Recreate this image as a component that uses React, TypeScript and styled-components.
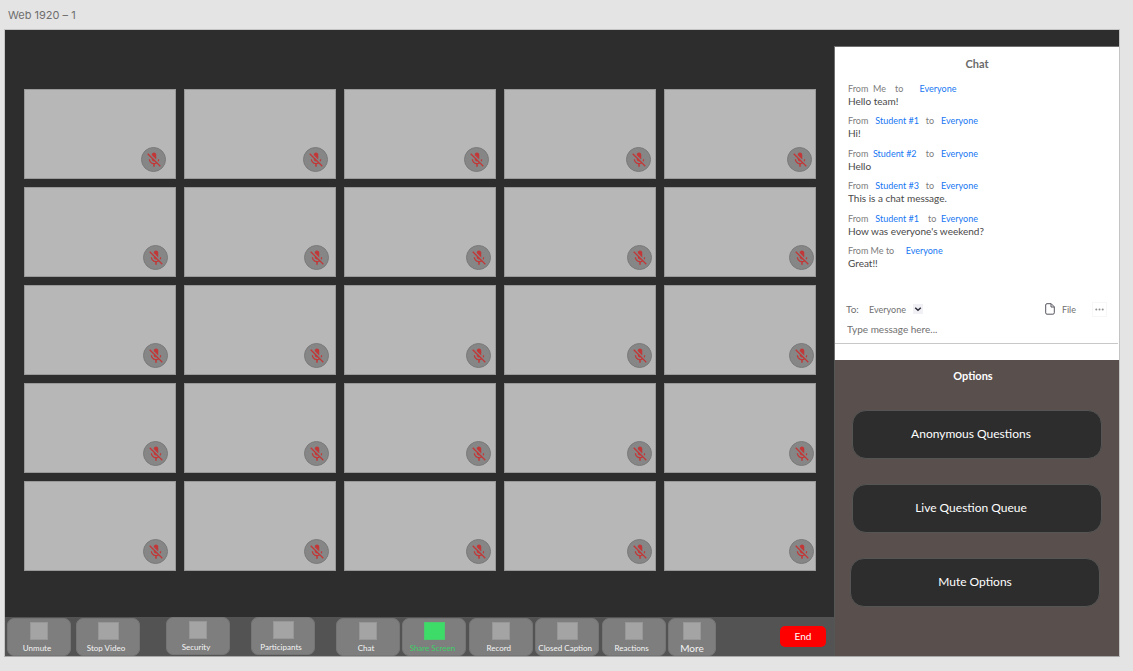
import React from "react";
import styled, { createGlobalStyle } from "styled-components";
import { MdMicOff } from "react-icons/md";

const GlobalStyle = createGlobalStyle`
  *, *::before, *::after { box-sizing: border-box; }
  body {
    margin: 0;
    background: #e4e4e4;
    font-family: Lato, "Open Sans", sans-serif;
  }
  button, input, select { font-family: inherit; }
`;

const Page = styled.div`
  padding: 0 13px 14px 4px;
`;

const ArtboardName = styled.h1`
  margin: 0;
  padding: 1px 4px 0;
  height: 29px;
  font: 400 11px/29px Inter, sans-serif;
  color: #6e6e6e;
`;

const Artboard = styled.div`
  display: grid;
  grid-template-columns: minmax(0, 1fr) 285px;
  border: 1px solid #c4c4c4;
  border-bottom-color: #a8a8a8;
  background: #2d2d2d;
`;

const Meeting = styled.main`
  display: flex;
  flex-direction: column;
  justify-content: space-between;
`;

const Gallery = styled.div`
  display: grid;
  grid-template-columns: repeat(5, minmax(0, 1fr));
  gap: 8px;
  padding: 59px 18px 0 19px;
`;

const Tile = styled.div<{ $inset: number }>`
  display: flex;
  justify-content: flex-end;
  align-items: flex-end;
  height: 90px;
  padding: 0 ${(p) => p.$inset}px 6px 0;
  border: 1px solid #999;
  background: #b7b7b7;
`;

const MutedBadge = styled.span`
  display: flex;
  align-items: center;
  justify-content: center;
  width: 25px;
  height: 25px;
  border: 1px solid #7a7a7a;
  border-radius: 50%;
  background: #868686;
  color: #c23838;
`;

const Toolbar = styled.div`
  display: flex;
  align-items: flex-start;
  height: 39px;
  padding-left: 2px;
  background: #535353;
`;

const ToolGroup = styled.div<{ $lead?: number; $gap?: number; $width?: number; $top?: number }>`
  display: flex;
  justify-content: space-between;
  gap: ${(p) => p.$gap ?? 0}px;
  width: ${(p) => (p.$width ? `${p.$width}px` : "auto")};
  margin: ${(p) => p.$top ?? 1}px 0 0 ${(p) => p.$lead ?? 0}px;
`;

const Tool = styled.button<{ $active?: boolean; $narrow?: boolean }>`
  display: flex;
  flex-direction: column;
  align-items: center;
  width: ${(p) => (p.$narrow ? 48 : 64)}px;
  height: 38px;
  padding: 3px 0 0;
  border: 1px solid #757575;
  border-radius: 7px;
  background: #7e7e7e;
  color: ${(p) => (p.$active ? "#3fce68" : "#f4f4f4")};
`;

const ToolGlyph = styled.span<{ $active?: boolean; $wide?: boolean }>`
  flex: none;
  width: ${(p) => (p.$wide ? 21 : 18)}px;
  height: 18px;
  border: 1px solid ${(p) => (p.$active ? "#48cc6c" : "#979797")};
  background: ${(p) => (p.$active ? "#3ddc68" : "#a4a4a4")};
`;

const ToolLabel = styled.span<{ $large?: boolean }>`
  padding: 2px ${(p) => (p.$large ? 0 : 4)}px 0 0;
  font-size: ${(p) => (p.$large ? 10 : 8)}px;
  line-height: 12px;
  white-space: nowrap;
`;

const EndButton = styled.button`
  width: 46px;
  height: 21px;
  margin: 9px 8px 0 auto;
  padding: 0;
  border: 0;
  border-radius: 5px;
  background: #ff0000;
  color: #fff;
  font-size: 10px;
  line-height: 21px;
`;

const Sidebar = styled.aside`
  display: flex;
  flex-direction: column;
  padding-top: 16px;
`;

const ChatPanel = styled.section`
  height: 314px;
  border: solid #707070;
  border-width: 1px 0 0 1px;
  background: #fff;
`;

const PanelTitle = styled.h2<{ $light?: boolean }>`
  margin: 0;
  padding: ${(p) => (p.$light ? "8px 8px 0 0" : "9px 0 0")};
  font-size: 11px;
  font-weight: 700;
  line-height: 15px;
  text-align: center;
  color: ${(p) => (p.$light ? "#fff" : "#6a6a6a")};
`;

const MessageList = styled.ul`
  display: flex;
  flex-direction: column;
  justify-content: space-between;
  height: 187px;
  margin: 12px 0 0;
  padding: 0 0 0 13px;
  list-style: none;
`;

const Route = styled.div`
  font-size: 9px;
  line-height: 12px;
  white-space: pre;
  color: #7c7c7c;
`;

const Person = styled.a`
  color: #1877f2;
  text-decoration: none;
`;

const MessageText = styled.p`
  margin: 0;
  font-size: 10px;
  line-height: 13px;
  color: #484848;
`;

const ComposeBar = styled.div`
  display: flex;
  align-items: center;
  height: 16px;
  margin-top: 31px;
  padding: 0 12px 0 11px;
  color: #707070;
`;

const ToLabel = styled.label`
  width: 23px;
  font-size: 10px;
`;

const SelectWrap = styled.span`
  position: relative;
  display: flex;
  align-items: center;
`;

const Recipient = styled.select`
  appearance: none;
  width: 54px;
  height: 16px;
  padding: 0;
  border: 0;
  background: transparent;
  font-size: 9px;
  color: #707070;
`;

const SelectArrow = styled.svg`
  position: absolute;
  right: 0;
  top: 3px;
  background: #f0f0f5;
  pointer-events: none;
`;

const FileButton = styled.button`
  display: flex;
  align-items: center;
  gap: 7px;
  margin-left: auto;
  padding: 0;
  border: 0;
  background: transparent;
  font-size: 9px;
  color: #707070;
`;

const MoreButton = styled.button`
  display: flex;
  align-items: center;
  justify-content: center;
  width: 15px;
  height: 15px;
  margin-left: 16px;
  padding: 0;
  border: 1px solid #f7f7f9;
  background: #fff;
`;

const MessageInput = styled.input`
  display: block;
  width: calc(100% - 1px);
  height: 27px;
  padding: 0 12px 2px;
  border: 0;
  border-bottom: 1px solid #c8c8c8;
  background: transparent;
  font-size: 10px;
  color: #484848;
  outline: none;
  &::placeholder { color: #707070; opacity: 1; }
`;

const OptionsPanel = styled.section`
  flex: 1;
  padding-bottom: 49px;
  border-left: 1px solid #555;
  background: #594f4d;
`;

const OptionList = styled.div`
  display: flex;
  flex-direction: column;
  gap: 25px;
  padding: 27px 17px 0;
`;

const OptionButton = styled.button<{ $pulled?: boolean }>`
  height: 49px;
  margin: ${(p) => (p.$pulled ? "0 2px 0 -2px" : "0")};
  padding: 0 ${(p) => (p.$pulled ? 0 : 12)}px 2px 0;
  border: 1px solid #555;
  border-radius: 14px;
  background: #2d2d2d;
  color: #fff;
  font-size: 12px;
`;

type ToolItem = { label: string; wide?: boolean; active?: boolean; narrow?: boolean };

const mediaTools: ToolItem[] = [{ label: "Unmute" }, { label: "Stop Video", wide: true }];
const hostTools: ToolItem[] = [{ label: "Security" }, { label: "Participants", wide: true }];
const shareTools: ToolItem[] = [
  { label: "Chat" },
  { label: "Share Screen", wide: true, active: true },
  { label: "Record" },
  { label: "Closed Caption", wide: true },
  { label: "Reactions" },
  { label: "More", narrow: true },
];

const messages = [
  { lead: "From  ", from: "Me", mid: "    to       ", text: "Hello team!", me: true },
  { lead: "From   ", from: "Student #1", mid: "   to   ", text: "Hi!" },
  { lead: "From  ", from: "Student #2", mid: "    to   ", text: "Hello" },
  { lead: "From   ", from: "Student #3", mid: "   to   ", text: "This is a chat message." },
  { lead: "From   ", from: "Student #1", mid: "    to  ", text: "How was everyone's weekend?" },
  { lead: "From ", from: "Me", mid: " to     ", text: "Great!!", me: true },
];

// Distance of the muted badge from the right edge of its tile, per column.
const firstRowInsets = [9, 7, 6, 4, 3];
const rowInsets = [7, 6, 4, 3, 1];
const gallery = [firstRowInsets, rowInsets, rowInsets, rowInsets, rowInsets];

function Tools({ items }: { items: ToolItem[] }) {
  return (
    <>
      {items.map((t) => (
        <Tool key={t.label} type="button" $active={t.active} $narrow={t.narrow}>
          <ToolGlyph $active={t.active} $wide={t.wide} />
          <ToolLabel $large={t.narrow}>{t.label}</ToolLabel>
        </Tool>
      ))}
    </>
  );
}

export default function App() {
  return (
    <>
      <GlobalStyle />
      <Page>
        <ArtboardName>Web 1920 – 1</ArtboardName>
        <Artboard>
          <Meeting>
            <Gallery>
              {gallery.map((row, r) =>
                row.map((inset, c) => (
                  <Tile key={`${r}-${c}`} $inset={inset}>
                    <MutedBadge>
                      <MdMicOff size={18} />
                    </MutedBadge>
                  </Tile>
                ))
              )}
            </Gallery>
            <Toolbar>
              <ToolGroup $gap={5}>
                <Tools items={mediaTools} />
              </ToolGroup>
              <ToolGroup $lead={26} $gap={21} $top={0}>
                <Tools items={hostTools} />
              </ToolGroup>
              <ToolGroup $lead={21} $width={380}>
                <Tools items={shareTools} />
              </ToolGroup>
              <EndButton type="button">End</EndButton>
            </Toolbar>
          </Meeting>
          <Sidebar>
            <ChatPanel>
              <PanelTitle>Chat</PanelTitle>
              <MessageList>
                {messages.map((m, i) => (
                  <li key={i}>
                    <Route>
                      {m.lead}
                      {m.me ? m.from : <Person href="#sender">{m.from}</Person>}
                      {m.mid}
                      <Person href="#everyone">Everyone</Person>
                    </Route>
                    <MessageText>{m.text}</MessageText>
                  </li>
                ))}
              </MessageList>
              <ComposeBar>
                <ToLabel htmlFor="recipient">To:</ToLabel>
                <SelectWrap>
                  <Recipient id="recipient" defaultValue="Everyone">
                    <option>Everyone</option>
                  </Recipient>
                  <SelectArrow width="10" height="10" viewBox="0 0 10 10" aria-hidden="true">
                    <path d="M2.2 3.8 5 6.3 7.8 3.8" fill="none" stroke="#2b2b38" strokeWidth="1.5" />
                  </SelectArrow>
                </SelectWrap>
                <FileButton type="button">
                  <svg width="10" height="12" viewBox="0 0 10 12" fill="none" stroke="#55555f" aria-hidden="true">
                    <path d="M2 .7h4.2l3.1 3.1v6a1.4 1.4 0 0 1-1.4 1.4H2A1.3 1.3 0 0 1 .7 9.9V2A1.3 1.3 0 0 1 2 .7Z" />
                    <path d="M6 .8V4h3.2" />
                  </svg>
                  File
                </FileButton>
                <MoreButton type="button" aria-label="More chat options">
                  <svg width="9" height="3" viewBox="0 0 9 3" fill="#909090" aria-hidden="true">
                    <circle cx="1.3" cy="1.5" r="1" />
                    <circle cx="4.5" cy="1.5" r="1" />
                    <circle cx="7.7" cy="1.5" r="1" />
                  </svg>
                </MoreButton>
              </ComposeBar>
              <MessageInput aria-label="Message" placeholder="Type message here..." />
            </ChatPanel>
            <OptionsPanel>
              <PanelTitle $light>Options</PanelTitle>
              <OptionList>
                <OptionButton type="button">Anonymous Questions</OptionButton>
                <OptionButton type="button">Live Question Queue</OptionButton>
                <OptionButton type="button" $pulled>
                  Mute Options
                </OptionButton>
              </OptionList>
            </OptionsPanel>
          </Sidebar>
        </Artboard>
      </Page>
    </>
  );
}
